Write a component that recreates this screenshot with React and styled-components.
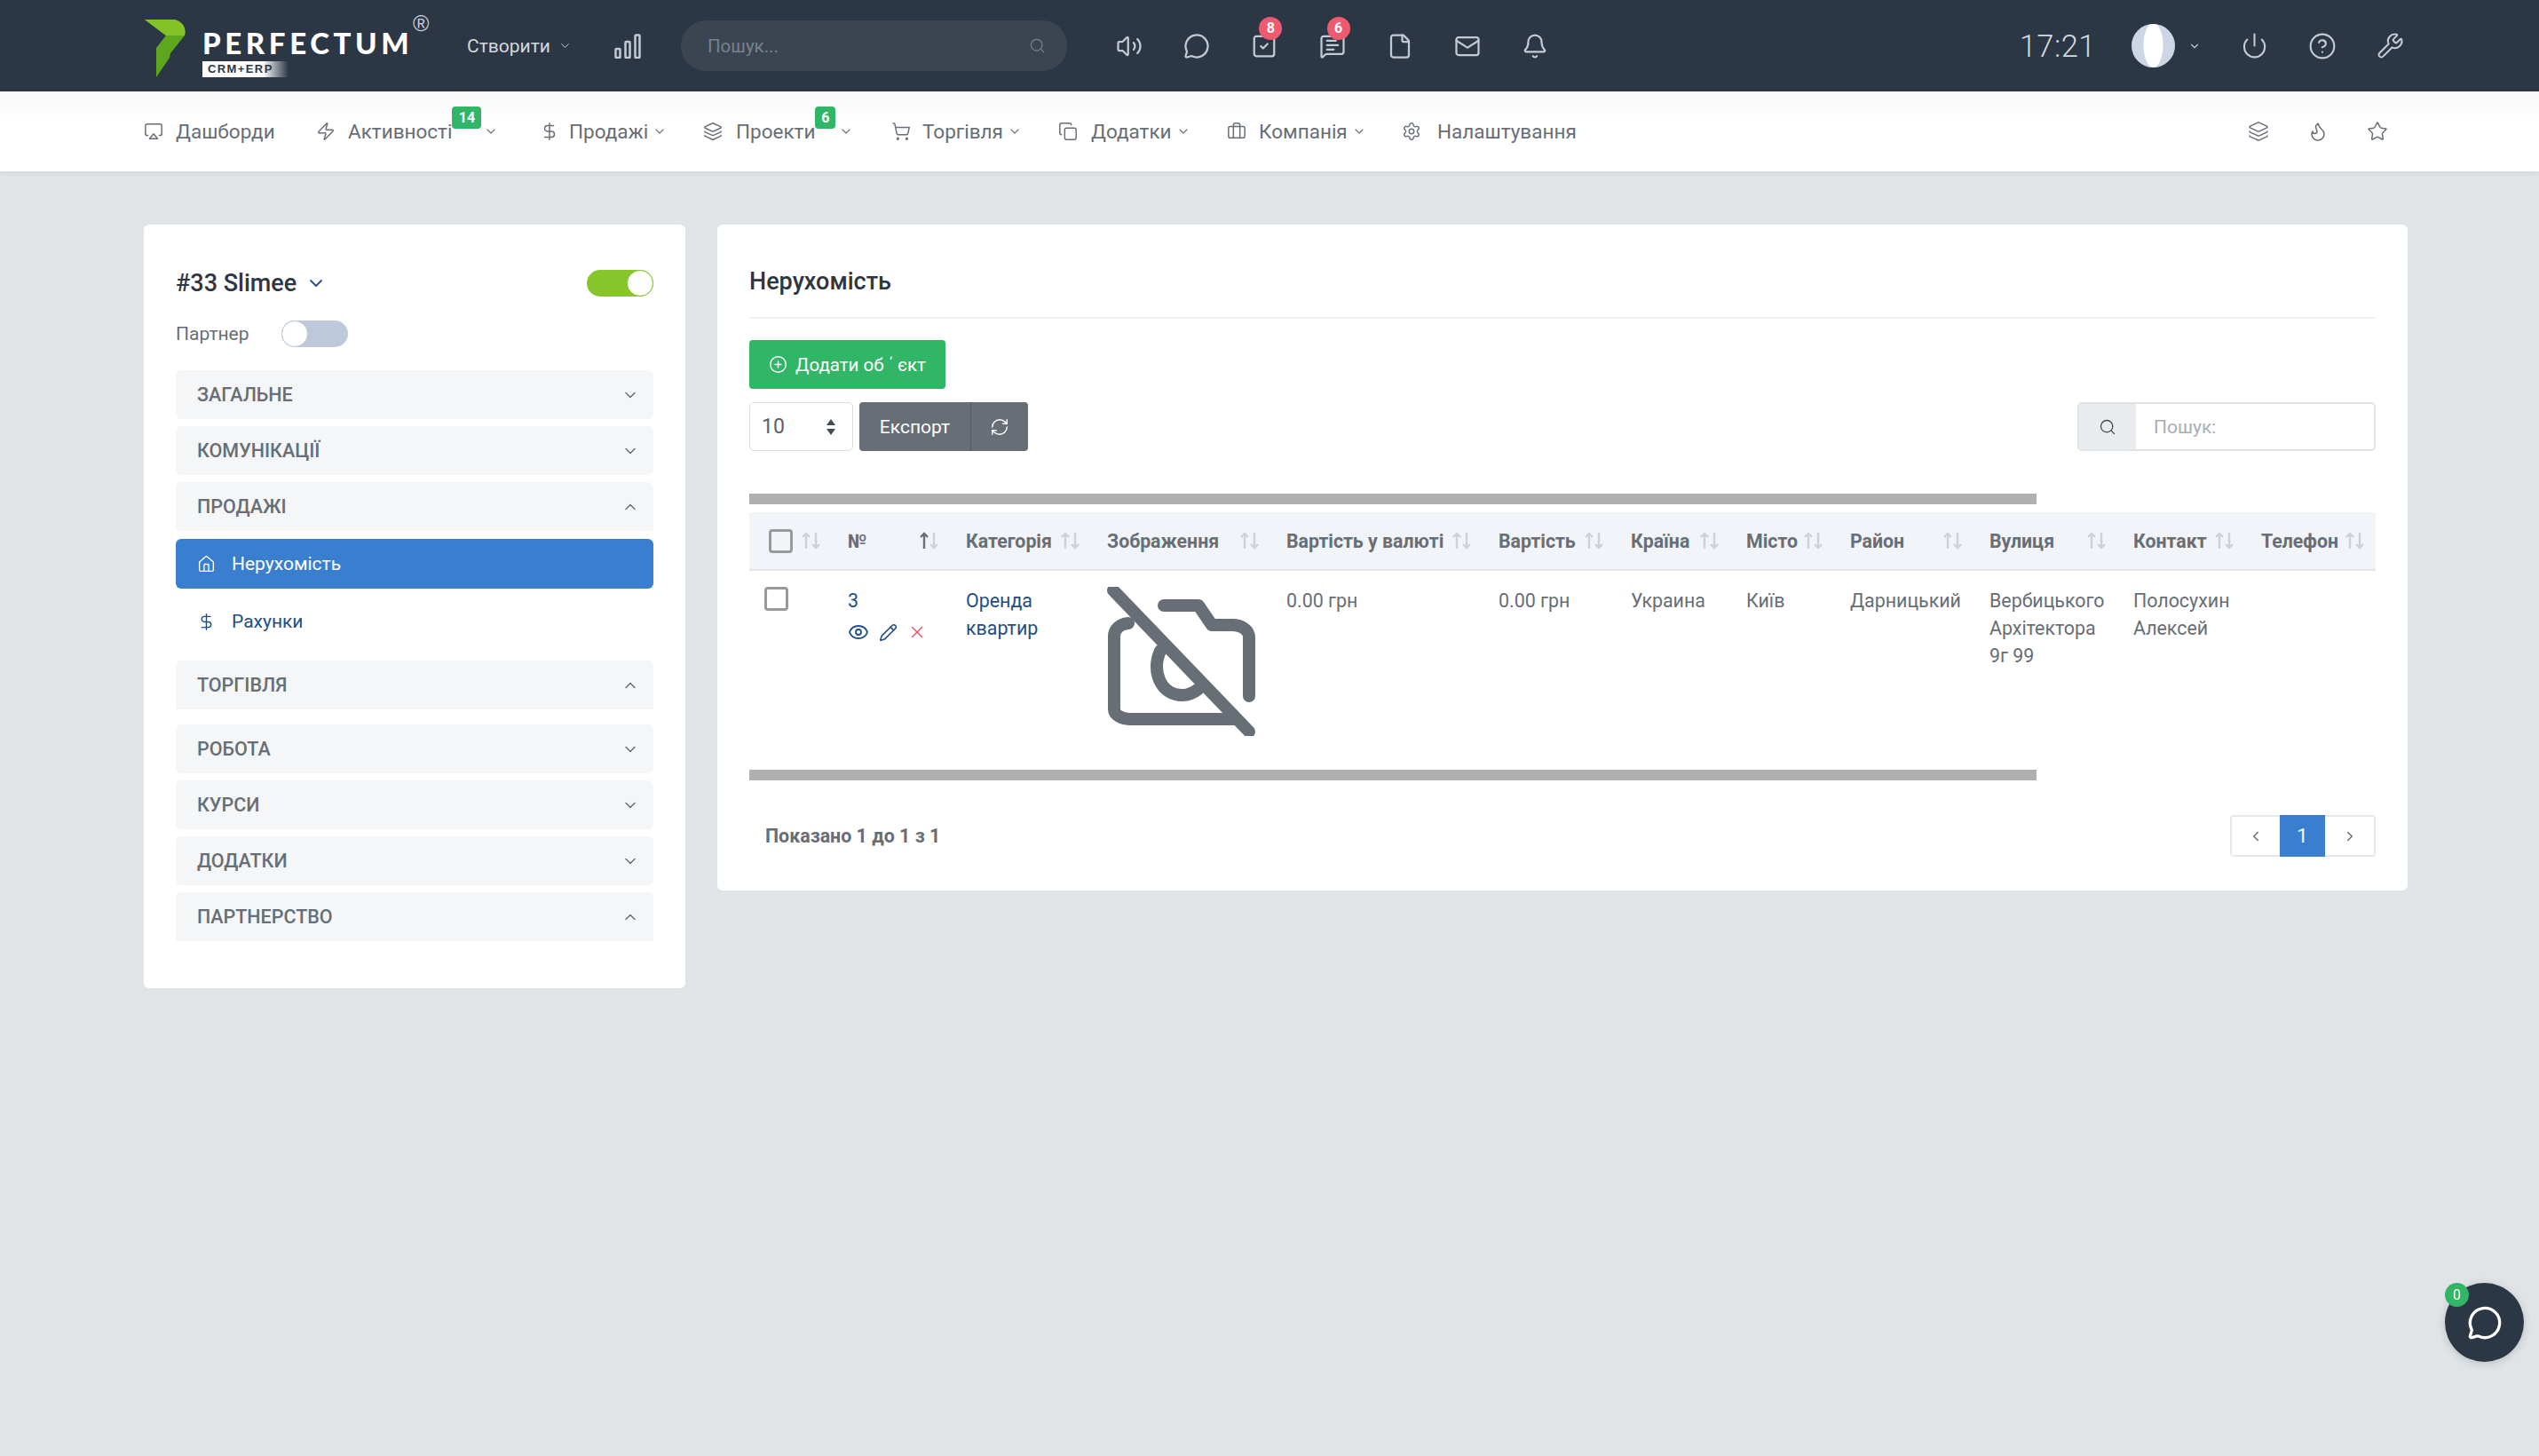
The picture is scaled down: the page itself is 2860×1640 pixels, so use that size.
import React from "react";
import styled, { createGlobalStyle } from "styled-components";
import {
  Airplay, Zap, DollarSign, Layers, ShoppingCart, Copy, Briefcase, Settings, Flame, Star,
  Volume2, MessageCircle, SquareCheck, MessageSquareText, File, Mail, Bell, Power,
  CircleHelp, Wrench, Search, RefreshCw, CirclePlus, Eye, Pencil, X, House,
  ChevronDown, ChevronUp, ChevronLeft, ChevronRight,
} from "lucide-react";

const FONT = `Roboto, "Noto Sans", sans-serif`;

const GlobalStyle = createGlobalStyle`
  * { box-sizing: border-box; }
  body {
    margin: 0;
    background: #e0e4e6;
    font-family: ${FONT};
    color: #676e75;
  }
`;

const Page = styled.div`
  min-height: 1640px;
  background: #e0e4e6;
`;

// ---------------------- top bar ----------------------
const TopBar = styled.header`
  height: 103px;
  background: #2c3745;
  display: flex;
  align-items: center;
  padding: 0 152px 0 163px;
`;

const Logo = styled.div`
  position: relative;
  width: 363px;
  height: 103px;
  display: flex;
  align-items: flex-start;
  flex-shrink: 0;
`;

const LogoMark = styled.svg`
  margin-top: 22px;
  width: 48px;
  height: 66px;
`;

const LogoText = styled.div`
  margin: 32px 0 0 17px;
  display: flex;
  flex-direction: column;
  gap: 4px;
`;

const LogoName = styled.div`
  font-family: Lato, "Liberation Sans", sans-serif;
  font-weight: 900;
  font-size: 33px;
  line-height: 33px;
  letter-spacing: 4.6px;
  color: #fff;
`;

const LogoTag = styled.div`
  width: 97px;
  height: 18px;
  padding-left: 6px;
  background: linear-gradient(90deg, #fff 70%, #2c3745 100%);
  font-family: "Liberation Sans", sans-serif;
  font-weight: 700;
  font-size: 13px;
  line-height: 18px;
  letter-spacing: 1.4px;
  color: #2c3745;
`;

const LogoReg = styled.span`
  position: absolute;
  left: 302px;
  top: 11px;
  font-family: "Liberation Sans", sans-serif;
  font-size: 25px;
  line-height: 30px;
  color: #c5cbd3;
`;

const CreateMenu = styled.div`
  display: flex;
  align-items: center;
  gap: 9px;
  width: 166px;
  font-size: 21px;
  color: #d3d8de;
`;

const BarsIcon = styled.svg`
  width: 30px;
  height: 28px;
  margin-right: 45px;
  flex-shrink: 0;
`;

const TopSearch = styled.div`
  width: 435px;
  height: 57px;
  border-radius: 28px;
  background: #3b4552;
  display: flex;
  align-items: center;
  justify-content: space-between;
  padding: 0 24px 0 30px;
  font-size: 20.5px;
  color: #78818c;
  flex-shrink: 0;
`;

const TopIcons = styled.div`
  display: flex;
  align-items: center;
  gap: 46.2px;
  margin-left: 55px;
`;

const TopIcon = styled.div`
  position: relative;
  display: flex;
  color: #c3cad3;
`;

const CountBadge = styled.span`
  position: absolute;
  top: -18px;
  left: 9px;
  width: 26px;
  height: 26px;
  border-radius: 50%;
  background: #ee5a6f;
  color: #fff;
  font-size: 16px;
  font-weight: 700;
  line-height: 26px;
  text-align: center;
`;

const TopRight = styled.div`
  margin-left: auto;
  display: flex;
  align-items: center;
`;

const Clock = styled.div`
  font-size: 34.5px;
  font-weight: 300;
  letter-spacing: 0.5px;
  color: #d3d8de;
  margin-right: 40px;
`;

const Avatar = styled.svg`
  width: 49px;
  height: 49px;
  border-radius: 50%;
  margin-right: 15px;
`;

const AvatarChevron = styled(ChevronDown)`
  color: #c3cad3;
  margin-right: 45px;
`;

const TopTools = styled.div`
  display: flex;
  align-items: center;
  gap: 45px;
  color: #c3cad3;
`;

// ---------------------- nav bar ----------------------
const NavBar = styled.nav`
  height: 90px;
  background: linear-gradient(180deg, #f6f7f8 0%, #fff 40%);
  display: flex;
  align-items: center;
  padding: 0 170px 0 162px;
  box-shadow: 0 2px 5px rgba(60, 70, 80, 0.08);
`;

const NavItem = styled.div`
  position: relative;
  width: ${(p) => p.$w}px;
  display: flex;
  align-items: center;
  font-size: 22.5px;
  color: #676e75;
  flex-shrink: 0;
`;

const NavIcon = styled.span`
  display: flex;
  width: ${(p) => p.$gap}px;
  flex-shrink: 0;
`;

const NavLabel = styled.span`
  position: relative;
  white-space: nowrap;
`;

const NavBadge = styled.span`
  position: absolute;
  top: -15px;
  left: 100%;
  min-width: ${(p) => p.$w}px;
  height: 25px;
  padding: 0 4px;
  border-radius: 4px;
  background: #31b566;
  color: #fff;
  font-size: 16px;
  font-weight: 700;
  line-height: 25px;
  text-align: center;
`;

const NavChevron = styled(ChevronDown)`
  margin-left: ${(p) => p.$ml}px;
  flex-shrink: 0;
`;

const NavRight = styled.div`
  margin-left: auto;
  display: flex;
  align-items: center;
  gap: 43px;
`;

// ---------------------- layout ----------------------
const Content = styled.div`
  display: grid;
  grid-template-columns: 610px 1904px;
  gap: 36px;
  align-items: start;
  padding: 60px 148px 0 162px;
`;

const Card = styled.section`
  background: #fff;
  border-radius: 6px;
`;

// ---------------------- sidebar ----------------------
const Sidebar = styled(Card)`
  padding: 51px 36px 53px;
`;

const SideHead = styled.div`
  display: flex;
  align-items: center;
  justify-content: space-between;
  height: 30px;
`;

const SideTitle = styled.div`
  display: flex;
  align-items: center;
  gap: 10px;
  font-size: 27px;
  font-weight: 500;
  color: #2f3640;
`;

const Switch = styled.div`
  width: 75px;
  height: 30px;
  border-radius: 15px;
  background: ${(p) => (p.$on ? "#86c52c" : "#bdc9da")};
  display: flex;
  justify-content: ${(p) => (p.$on ? "flex-end" : "flex-start")};
  flex-shrink: 0;
`;

const Knob = styled.span`
  width: 30px;
  height: 30px;
  border-radius: 50%;
  background: #fff;
  border: 1px solid ${(p) => (p.$on ? "#86c52c" : "#bdc9da")};
`;

const PartnerRow = styled.div`
  display: flex;
  align-items: center;
  height: 30px;
  margin: 27px 0 26px;
  font-size: 21px;
`;

const PartnerLabel = styled.span`
  width: 119px;
`;

const Accordion = styled.div`
  display: flex;
  flex-direction: column;
`;

const AccordionHead = styled.div`
  height: 55px;
  margin-bottom: ${(p) => p.$mb}px;
  padding: 0 16px 0 24px;
  display: flex;
  align-items: center;
  justify-content: space-between;
  background: #f4f6f8;
  border-radius: ${(p) => (p.$open ? "6px 6px 0 0" : "6px")};
  font-size: 21.5px;
  font-weight: 500;
  color: #676e75;
`;

const SideLink = styled.div`
  height: 56px;
  padding: 0 24px;
  display: flex;
  align-items: center;
  gap: 18px;
  margin-bottom: ${(p) => p.$mb}px;
  border-radius: 6px;
  background: ${(p) => (p.$active ? "#3a7fcf" : "transparent")};
  color: ${(p) => (p.$active ? "#fff" : "#224e85")};
  font-size: 21px;
`;

// ---------------------- main card ----------------------
const MainCard = styled(Card)`
  padding: 0 36px 38px;
`;

const MainTitle = styled.h2`
  margin: 0;
  height: 106px;
  padding-top: 24px;
  display: flex;
  align-items: center;
  border-bottom: 2px solid #f0f2f4;
  font-size: 27px;
  font-weight: 500;
  line-height: 32px;
  color: #2f3640;
`;

const AddButton = styled.div`
  width: 221px;
  height: 55px;
  margin: 24px 0 15px;
  display: flex;
  align-items: center;
  justify-content: center;
  gap: 9px;
  border-radius: 4px;
  background: #31b566;
  color: #fff;
  font-size: 20.5px;
`;

const Toolbar = styled.div`
  display: flex;
  align-items: center;
  height: 55px;
`;

const PageSize = styled.div`
  width: 117px;
  height: 55px;
  padding: 0 18px 0 13px;
  display: flex;
  align-items: center;
  justify-content: space-between;
  border: 1px solid #d9dde1;
  border-radius: 5px;
  font-size: 23px;
  color: #5a6168;
`;

const Carets = styled.svg`
  width: 12px;
  height: 20px;
`;

const ExportGroup = styled.div`
  margin-left: 7px;
  height: 55px;
  display: flex;
  border-radius: 4px;
  overflow: hidden;
  background: #676e75;
  color: #fff;
  font-size: 21px;
`;

const ExportPart = styled.div`
  width: ${(p) => p.$w}px;
  display: flex;
  align-items: center;
  justify-content: center;
  border-left: ${(p) => (p.$split ? "1px solid #575d63" : "none")};
`;

const TableSearch = styled.div`
  margin-left: auto;
  width: 336px;
  height: 55px;
  display: flex;
  border: 2px solid #dfe3e6;
  border-radius: 5px;
  overflow: hidden;
`;

const SearchAddon = styled.div`
  width: 64px;
  display: flex;
  align-items: center;
  justify-content: center;
  background: #e9ecef;
  color: #444b52;
`;

const SearchHint = styled.div`
  flex: 1;
  padding-left: 20px;
  display: flex;
  align-items: center;
  font-size: 21px;
  color: #a9aeb4;
`;

const ScrollBar = styled.div`
  width: 1450px;
  height: 12px;
  background: #b0b0b0;
  margin: ${(p) => p.$m};
`;

const Table = styled.table`
  width: 1832px;
  height: 281px;
  table-layout: fixed;
  border-collapse: collapse;
`;

const Col = styled.col`
  width: ${(p) => p.$w}px;
`;

const Th = styled.th`
  height: 65px;
  padding: 0 12px 0 ${(p) => p.$pl || 18}px;
  background: #f1f4f8;
  border-bottom: 2px solid #e3e6e9;
  font-size: 21.3px;
  font-weight: 700;
  color: #676e75;
  text-align: left;
`;

const ThInner = styled.div`
  display: flex;
  align-items: center;
  justify-content: space-between;
  white-space: nowrap;
`;

const Sort = styled.svg`
  width: 22px;
  height: 22px;
  flex-shrink: 0;
`;

const Td = styled.td`
  padding: 17.5px 0 0 ${(p) => p.$pl || 18}px;
  vertical-align: top;
  font-size: 21.4px;
  line-height: 31px;
  color: ${(p) => (p.$link ? "#224e85" : "#676e75")};
`;

const CheckBox = styled.span`
  display: block;
  width: 27px;
  height: 27px;
  border: 3px solid #999;
  border-radius: 4px;
`;

const Actions = styled.div`
  display: flex;
  align-items: center;
  gap: 11px;
  margin-top: 7px;
  height: 27px;
`;

const NoPhoto = styled.svg`
  display: block;
  width: 168px;
  height: 168px;
`;

const Footer = styled.div`
  display: flex;
  align-items: center;
  justify-content: space-between;
  height: 47px;
  margin-top: 39px;
  padding-left: 18px;
  font-size: 21.4px;
  font-weight: 700;
`;

const Pager = styled.div`
  display: flex;
  height: 47px;
  border: 2px solid #e6e8ea;
  border-radius: 4px;
`;

const PagerItem = styled.div`
  width: ${(p) => p.$w}px;
  margin: ${(p) => (p.$active ? "-2px 0" : "0")};
  display: flex;
  align-items: center;
  justify-content: center;
  background: ${(p) => (p.$active ? "#3a7fcf" : "#fff")};
  color: ${(p) => (p.$active ? "#fff" : "#676e75")};
  font-size: 22px;
  font-weight: 400;
`;

// ---------------------- chat ----------------------
const ChatButton = styled.div`
  position: fixed;
  right: 17px;
  bottom: 106px;
  width: 89px;
  height: 89px;
  border-radius: 50%;
  background: #2c3745;
  display: flex;
  align-items: center;
  justify-content: center;
  color: #fff;
  box-shadow: 0 2px 10px rgba(44, 55, 69, 0.2);
`;

const ChatBadge = styled.span`
  position: absolute;
  left: 0;
  top: 0;
  width: 27px;
  height: 27px;
  border-radius: 50%;
  background: #31b566;
  color: #fff;
  font-size: 16px;
  line-height: 27px;
  text-align: center;
`;

//---------------------- data ----------------------
const navItems = [
  { label: "Дашборди", icon: Airplay, w: 194, gap: 36 },
  { label: "Активності", icon: Zap, w: 252, gap: 36, badge: "14", badgeW: 33, chev: 36 },
  { label: "Продажі", icon: DollarSign, w: 184, gap: 33, chev: 5 },
  { label: "Проекти", icon: Layers, w: 212, gap: 37, badge: "6", badgeW: 23, chev: 27 },
  { label: "Торгівля", icon: ShoppingCart, w: 188, gap: 35, chev: 5 },
  { label: "Додатки", icon: Copy, w: 190, gap: 37, chev: 5 },
  { label: "Компанія", icon: Briefcase, w: 197, gap: 36, chev: 5 },
  { label: "Налаштування", icon: Settings, w: 260, gap: 40 },
];

const sections = [
  { title: "ЗАГАЛЬНЕ", mb: 8 },
  { title: "КОМУНІКАЦІЇ", mb: 8 },
  { title: "ПРОДАЖІ", open: true, mb: 9, links: true },
  { title: "ТОРГІВЛЯ", open: true, mb: 17 },
  { title: "РОБОТА", mb: 8 },
  { title: "КУРСИ", mb: 8 },
  { title: "ДОДАТКИ", mb: 8 },
  { title: "ПАРТНЕРСТВО", open: true, mb: 0 },
];

const columns = [
  { w: 93 }, { w: 133, label: "№", sorted: true }, { w: 159, label: "Категорія" },
  { w: 202, label: "Зображення" }, { w: 239, label: "Вартість у валюті" }, { w: 149, label: "Вартість" },
  { w: 130, label: "Країна" }, { w: 117, label: "Місто" }, { w: 157, label: "Район" },
  { w: 162, label: "Вулиця" }, { w: 144, label: "Контакт" }, { w: 147, label: "Телефон" },
];

const SortArrows = ({ sorted }) => (
  <Sort viewBox="0 0 22 22" fill="none" strokeWidth="2.4">
    <path d="M5 20V3M1 7l4-4 4 4" stroke={sorted ? "#676e75" : "#cdd2d7"} />
    <path d="M16 2v17M12 15l4 4 4-4" stroke="#cdd2d7" />
  </Sort>
);

const App = () => {
  return (
    <Page>
      <GlobalStyle />
      <TopBar>
        <Logo>
          <LogoMark viewBox="0 0 48 66">
            <path d="M0 0h33c10 2 14 10 12 18L29 38l-1 5-15 22V32l11-14z" fill="#5ea61e" />
            <path d="M0 0h33c10 2 14 10 12 18L24 18z" fill="#84c326" />
          </LogoMark>
          <LogoText>
            <LogoName>PERFECTUM</LogoName>
            <LogoTag>CRM+ERP</LogoTag>
          </LogoText>
          <LogoReg>®</LogoReg>
        </Logo>
        <CreateMenu>Створити <ChevronDown size={15} strokeWidth={1.5} /></CreateMenu>
        <BarsIcon viewBox="0 0 30 28" fill="none" stroke="#c3cad3" strokeWidth="2.5">
          <rect x="1.5" y="17" width="5" height="10" rx="1" />
          <rect x="12.5" y="9" width="5" height="18" rx="1" />
          <rect x="23.5" y="1.5" width="5" height="25.5" rx="1" />
        </BarsIcon>
        <TopSearch>Пошук... <Search size={19} strokeWidth={1.5} /></TopSearch>
        <TopIcons>
          <TopIcon><Volume2 size={30} strokeWidth={1.8} /></TopIcon>
          <TopIcon><MessageCircle size={30} strokeWidth={1.8} /></TopIcon>
          <TopIcon><SquareCheck size={30} strokeWidth={1.8} /><CountBadge>8</CountBadge></TopIcon>
          <TopIcon><MessageSquareText size={30} strokeWidth={1.8} /><CountBadge>6</CountBadge></TopIcon>
          <TopIcon><File size={30} strokeWidth={1.8} /></TopIcon>
          <TopIcon><Mail size={30} strokeWidth={1.8} /></TopIcon>
          <TopIcon><Bell size={30} strokeWidth={1.8} /></TopIcon>
        </TopIcons>
        <TopRight>
          <Clock>17:21</Clock>
          <Avatar viewBox="0 0 49 49">
            <rect width="49" height="49" fill="#cdd6e4" />
            <ellipse cx="24.5" cy="24" rx="11" ry="25" fill="#fff" />
          </Avatar>
          <AvatarChevron size={14} />
          <TopTools>
            <Power size={31} strokeWidth={1.6} />
            <CircleHelp size={32} strokeWidth={1.6} />
            <Wrench size={31} strokeWidth={1.6} />
          </TopTools>
        </TopRight>
      </TopBar>

      <NavBar>
        {navItems.map((item) => (
          <NavItem key={item.label} $w={item.w}>
            <NavIcon $gap={item.gap}><item.icon size={22} strokeWidth={1.6} /></NavIcon>
            <NavLabel>
              {item.label}
              {item.badge && <NavBadge $w={item.badgeW}>{item.badge}</NavBadge>}
            </NavLabel>
            {item.chev && <NavChevron size={16} strokeWidth={1.7} $ml={item.chev} />}
          </NavItem>
        ))}
        <NavRight>
          <Layers size={24} strokeWidth={1.5} />
          <Flame size={24} strokeWidth={1.5} />
          <Star size={24} strokeWidth={1.5} />
        </NavRight>
      </NavBar>

      <Content>
        <Sidebar>
          <SideHead>
            <SideTitle>#33 Slimee <ChevronDown size={24} strokeWidth={1.8} color="#224e85" /></SideTitle>
            <Switch $on><Knob $on /></Switch>
          </SideHead>
          <PartnerRow>
            <PartnerLabel>Партнер</PartnerLabel>
            <Switch><Knob /></Switch>
          </PartnerRow>
          <Accordion>
            {sections.map((s) => (
              <React.Fragment key={s.title}>
                <AccordionHead $open={s.open} $mb={s.mb}>
                  {s.title}
                  {s.open ? <ChevronUp size={20} strokeWidth={1.7} /> : <ChevronDown size={20} strokeWidth={1.7} />}
                </AccordionHead>
                {s.links && (
                  <>
                    <SideLink $active $mb={9}><House size={21} strokeWidth={1.6} /> Нерухомість</SideLink>
                    <SideLink $mb={16}><DollarSign size={21} strokeWidth={1.6} /> Рахунки</SideLink>
                  </>
                )}
              </React.Fragment>
            ))}
          </Accordion>
        </Sidebar>

        <MainCard>
          <MainTitle>Нерухомість</MainTitle>
          <AddButton><CirclePlus size={21} strokeWidth={1.6} /> Додати об ΄ єкт</AddButton>
          <Toolbar>
            <PageSize>
              10
              <Carets viewBox="0 0 12 20" fill="#444b52">
                <path d="M6 1l5 7H1zM6 19l5-7H1z" />
              </Carets>
            </PageSize>
            <ExportGroup>
              <ExportPart $w={125}>Експорт</ExportPart>
              <ExportPart $w={65} $split><RefreshCw size={22} strokeWidth={1.6} /></ExportPart>
            </ExportGroup>
            <TableSearch>
              <SearchAddon><Search size={20} strokeWidth={1.6} /></SearchAddon>
              <SearchHint>Пошук:</SearchHint>
            </TableSearch>
          </Toolbar>
          <ScrollBar $m="48px 0 9px" />
          <Table>
            <colgroup>
              {columns.map((c, i) => <Col key={i} $w={c.w} />)}
            </colgroup>
            <thead>
              <tr>
                {columns.map((c, i) => (
                  <Th key={i} $pl={i === 0 ? 22 : 18}>
                    <ThInner>
                      {i === 0 ? <CheckBox /> : c.label}
                      <SortArrows sorted={c.sorted} />
                    </ThInner>
                  </Th>
                ))}
              </tr>
            </thead>
            <tbody>
              <tr>
                <Td $pl={17}><CheckBox /></Td>
                <Td $link>
                  3
                  <Actions>
                    <Eye size={24} strokeWidth={1.8} />
                    <Pencil size={21} strokeWidth={1.8} />
                    <X size={22} strokeWidth={1.6} color="#e8596b" />
                  </Actions>
                </Td>
                <Td $link>Оренда<br />квартир</Td>
                <Td>
                  <NoPhoto viewBox="0 0 168 168" fill="none" stroke="#676e75" strokeWidth="14" strokeLinecap="round" strokeLinejoin="round">
                    <path d="M7 4l153 159" />
                    <path d="M64 21h39l15 22h23c11 0 19 6 19 14v66" />
                    <path d="M24 41c-10 1-16 7-16 15v82c0 6 8 11 19 11h117" />
                    <path d="M60 72c-10 23 0 50 25 50 7 0 13-3 18-7" />
                  </NoPhoto>
                </Td>
                <Td>0.00 грн</Td>
                <Td>0.00 грн</Td>
                <Td>Украина</Td>
                <Td>Київ</Td>
                <Td>Дарницький</Td>
                <Td>Вербицького<br />Архітектора<br />9г 99</Td>
                <Td>Полосухин<br />Алексей</Td>
                <Td />
              </tr>
            </tbody>
          </Table>
          <ScrollBar $m="9px 0 0" />
          <Footer>
            Показано 1 до 1 з 1
            <Pager>
              <PagerItem $w={54}><ChevronLeft size={18} /></PagerItem>
              <PagerItem $w={51} $active>1</PagerItem>
              <PagerItem $w={55}><ChevronRight size={18} /></PagerItem>
            </Pager>
          </Footer>
        </MainCard>
      </Content>

      <ChatButton>
        <MessageCircle size={40} strokeWidth={2} />
        <ChatBadge>0</ChatBadge>
      </ChatButton>
    </Page>
  );
};

export default App;
